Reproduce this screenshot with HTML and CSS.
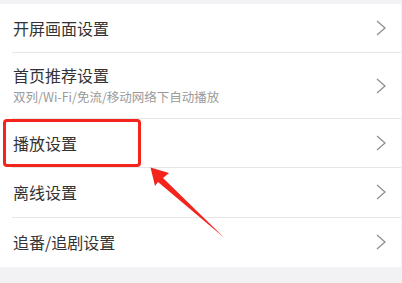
FILE: index.html
```html
<!DOCTYPE html>
<html lang="zh-CN">
<head>
<meta charset="utf-8">
<link rel="stylesheet" href="styles.css">
</head>
<body>
<div class="page">
  <ul class="list">
    <li class="row"><div class="text"><div class="title">开屏画面设置</div></div><svg class="chev" viewBox="0 0 10 16"><path d="M1 1 L9 8 L1 15" /></svg></li>
    <li class="row tall"><div class="text"><div class="title">首页推荐设置</div><div class="sub">双列/Wi-Fi/免流/移动网络下自动播放</div></div><svg class="chev" viewBox="0 0 10 16"><path d="M1 1 L9 8 L1 15" /></svg></li>
    <li class="row"><div class="text"><div class="title">播放设置</div></div><svg class="chev" viewBox="0 0 10 16"><path d="M1 1 L9 8 L1 15" /></svg></li>
    <li class="row"><div class="text"><div class="title">离线设置</div></div><svg class="chev" viewBox="0 0 10 16"><path d="M1 1 L9 8 L1 15" /></svg></li>
    <li class="row last"><div class="text"><div class="title">追番/追剧设置</div></div><svg class="chev" viewBox="0 0 10 16"><path d="M1 1 L9 8 L1 15" /></svg></li>
  </ul>
  <div class="highlight"></div>
  <svg class="arrow" viewBox="0 0 402 283" width="402" height="283"><polygon points="150.5,167.5 169,173 163,178 224.5,238 158,182 155,186" /></svg>
</div>
</body>
</html>
```
FILE: styles.css
```css
html, body {
  margin: 0;
  padding: 0;
}
body {
  background: #f2f2f4;
  font-family: "Noto Sans CJK SC", "Noto Sans", sans-serif;
}
.page {
  position: relative;
  width: 402px;
  height: 283px;
  overflow: hidden;
  padding-top: 4px;
  box-sizing: border-box;
}
.list {
  list-style: none;
  margin: 0;
  padding: 0;
  width: 401px;
  background: #ffffff;
}
.row {
  display: flex;
  align-items: center;
  height: 49.33px;
  box-sizing: border-box;
  margin-left: 12px;
  padding-left: 1px;
  padding-right: 15px;
  border-bottom: 1px solid #e6e6e6;
}
.row.tall {
  height: 65.67px;
}
.row.last {
  border-bottom: none;
}
.text {
  flex: 1;
  display: flex;
  flex-direction: column;
}
.title {
  font-size: 16px;
  line-height: 22px;
  color: #333333;
}
.sub {
  font-size: 12.5px;
  line-height: 16px;
  margin-top: 3px;
  color: #9a9a9a;
}
.tall .text {
  padding-bottom: 2px;
}
.chev {
  width: 10px;
  height: 16px;
  fill: none;
  stroke: #8f8f8f;
  stroke-width: 1.3;
}
.highlight {
  position: absolute;
  left: 3px;
  top: 119px;
  width: 138px;
  height: 48px;
  box-sizing: border-box;
  border: 3px solid #f4231c;
  border-radius: 4px;
}
.arrow {
  position: absolute;
  left: 0;
  top: 0;
  fill: #f4231c;
}
```
